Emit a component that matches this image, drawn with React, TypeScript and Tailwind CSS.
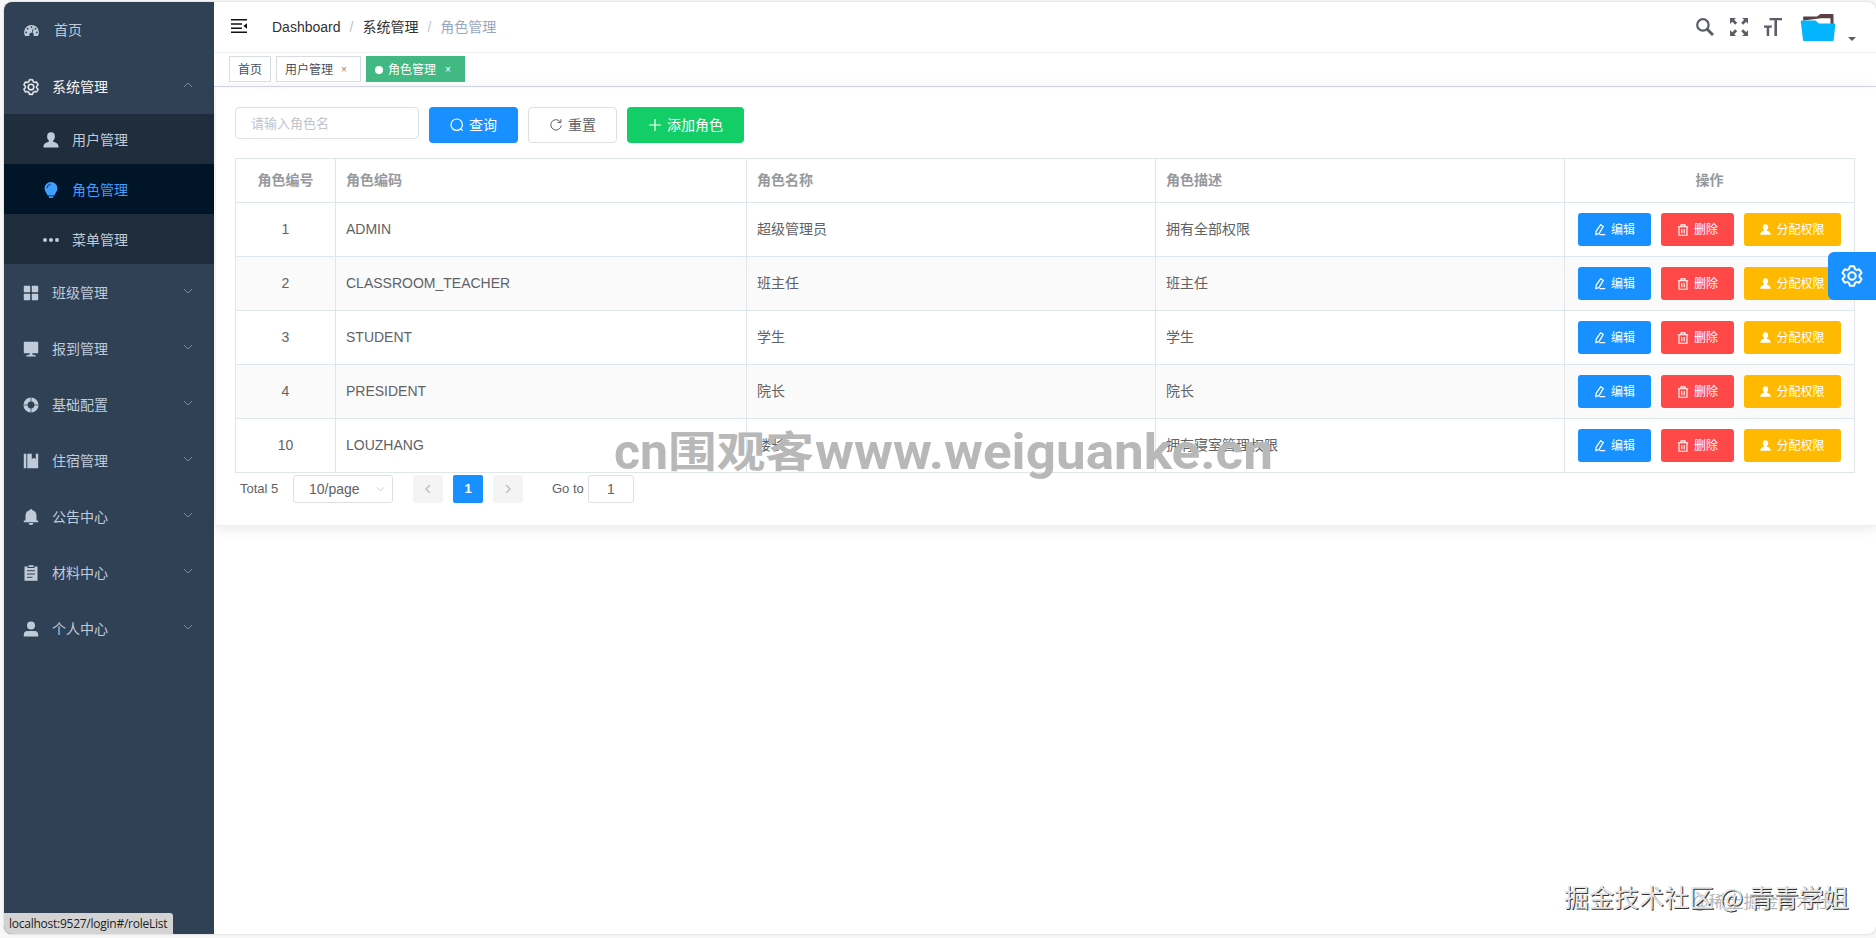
import React from 'react';

type IconProps = { className?: string };

const GearIcon: React.FC<IconProps> = ({ className }) => (
  <svg viewBox="0 0 1024 1024" fill="currentColor" stroke="currentColor" strokeWidth="22" className={className}>
    <path d="M600.7 64a32 32 0 0 1 30.500 22.200l35.200 109.400c14.700 7.200 28.700 15.400 42.400 24.400l112.400-24.200a32 32 0 0 1 34.400 15.300L944.300 364.800a32 32 0 0 1-4 37.500l-77.100 85.100a357.100 357.100 0 0 1 0 49l77.100 85.200a32 32 0 0 1 4 37.500l-88.700 153.600a32 32 0 0 1-34.400 15.300L708.800 803.900c-13.600 9.100-27.800 17.200-42.300 24.400l-35.300 109.400A32 32 0 0 1 600.700 960H423.300a32 32 0 0 1-30.500-22.200L357.700 828.500a351.600 351.600 0 0 1-42.600-24.600l-112.400 24.200a32 32 0 0 1-34.400-15.300L79.700 659.200a32 32 0 0 1 4-37.500l77.100-85.200a357.100 357.100 0 0 1 0-48.900l-77.100-85.300a32 32 0 0 1-4-37.500l88.700-153.600a32 32 0 0 1 34.400-15.300l112.400 24.300c13.700-9.100 27.900-17.300 42.600-24.600l35.100-109.400A32 32 0 0 1 423.300 64H600.700zM577.300 128H446.700l-36.400 113.100-24.500 12.300a294.100 294.100 0 0 0-34.800 20.100l-22.800 15.400-116.400-25.100-65.300 113.200 79.700 88.200-2 27.300a293.100 293.100 0 0 0 0 40.200l2 27.300-79.800 88.200 65.300 113.200 116.400-25 22.800 15.300c11.200 7.500 22.800 14.200 34.800 20.100l24.500 12.300 36.400 113.100h130.700l36.500-113.200 24.400-12.200a288.300 288.300 0 0 0 34.700-20.100l22.800-15.400 116.500 25.100 65.300-113.200-79.800-88.200 2-27.300a293.100 293.100 0 0 0 0-40.300l-2-27.300 79.800-88.100-65.300-113.200-116.500 24.900-22.800-15.200a288.300 288.300 0 0 0-34.700-20.100l-24.400-12.200L577.300 128zM512 320a192 192 0 1 1 0 384 192 192 0 0 1 0-384zm0 64a128 128 0 1 0 0 256 128 128 0 0 0 0-256z" />
  </svg>
);

const DashboardIcon: React.FC<IconProps> = ({ className }) => (
  <svg viewBox="0 0 16 14" className={className}>
    <path fill="currentColor" d="M8 1a8 8 0 0 1 8 8c0 1.600-.4 3-1.200 4H10a2.200 2.200 0 0 0-.8-3.200l1-4.300-.9-.2-1 4.200A2.200 2.200 0 0 0 6 13H1.200A8 8 0 0 1 0 9a8 8 0 0 1 8-8Z" />
    <g fill="#304156">
      <circle cx="8" cy="3.300" r="1" />
      <circle cx="3.800" cy="5" r="1" />
      <circle cx="12.300" cy="5" r="1" />
      <circle cx="2.300" cy="9" r="1" />
      <circle cx="13.700" cy="9" r="1" />
    </g>
  </svg>
);

const UserSolidIcon: React.FC<IconProps> = ({ className }) => (
  <svg viewBox="0 0 16 16" fill="currentColor" className={className}>
    <ellipse cx="8" cy="4.600" rx="3.900" ry="4.300" />
    <path d="M5.800 8h4.400v1.700c3.300.6 5.400 2.300 5.400 5.300v.6H.4V15c0-3 2.100-4.700 5.400-5.300z" />
  </svg>
);

const PersonIcon: React.FC<IconProps> = ({ className }) => (
  <svg viewBox="0 0 16 16" fill="currentColor" className={className}>
    <circle cx="8" cy="4.600" r="4" />
    <path d="M.8 15.500v-1.800c0-2.600 1.700-3.700 3.700-3.700h7c2 0 3.700 1.100 3.700 3.700v1.800z" />
  </svg>
);

const BulbIcon: React.FC<IconProps> = ({ className }) => (
  <svg viewBox="0 0 16 16" className={className}>
    <path fill="currentColor" d="M8 0a6.400 6.400 0 0 1 6.400 6.400c0 3-2.200 4.300-3 7H4.600c-.8-2.700-3-4-3-7A6.400 6.400 0 0 1 8 0ZM5.400 14.300h5.200L9.700 16H6.300z" />
    <path fill="none" stroke="#001528" strokeWidth=".8" d="M4 6.200A4 4 0 0 1 7.500 2.300" />
  </svg>
);

const MoreIcon: React.FC<IconProps> = ({ className }) => (
  <svg viewBox="0 0 16 16" fill="currentColor" className={className}>
    <circle cx="2" cy="8" r="2" />
    <circle cx="8" cy="8" r="2" />
    <circle cx="14" cy="8" r="2" />
  </svg>
);

const GridIcon: React.FC<IconProps> = ({ className }) => (
  <svg viewBox="0 0 16 16" fill="currentColor" className={className}>
    <rect x=".8" y=".8" width="6.400" height="6.400" rx=".6" />
    <rect x="8.800" y=".8" width="6.400" height="6.400" rx=".6" />
    <rect x=".8" y="8.800" width="6.400" height="6.400" rx=".6" />
    <rect x="8.800" y="8.800" width="6.400" height="6.400" rx=".6" />
  </svg>
);

const MonitorIcon: React.FC<IconProps> = ({ className }) => (
  <svg viewBox="0 0 16 16" fill="currentColor" className={className}>
    <rect x=".8" y=".8" width="14.400" height="11.400" rx=".6" />
    <path d="M6.800 12h2.400v1.600l3.600.9v.9H3.200v-.9l3.600-.9z" />
  </svg>
);

const HelpIcon: React.FC<IconProps> = ({ className }) => (
  <svg viewBox="0 0 16 16" className={className}>
    <circle cx="8" cy="8" r="5.500" fill="none" stroke="currentColor" strokeWidth="4.200" />
    <path d="M8 0v5M8 11v5M0 8h5M11 8h5" stroke="#304156" strokeWidth=".7" />
  </svg>
);

const NotebookIcon: React.FC<IconProps> = ({ className }) => (
  <svg viewBox="0 0 16 16" fill="currentColor" className={className}>
    <path d="M.8.8h2.500v14.400H.8zM4.300.8h4.500v5.400l2-1.500 2 1.500V.8h2.400v14.400H4.300z" />
  </svg>
);

const BellIcon: React.FC<IconProps> = ({ className }) => (
  <svg viewBox="0 0 16 16" fill="currentColor" className={className}>
    <path d="M7.200 0h1.600v1.100c2.800.4 4.700 2.700 4.700 5.500v5h1.700v1.600H.8v-1.600h1.700v-5c0-2.800 1.900-5.100 4.700-5.500zM5.500 14h5A2.500 2.500 0 0 1 8 16a2.500 2.500 0 0 1-2.500-2z" />
  </svg>
);

const ClipboardIcon: React.FC<IconProps> = ({ className }) => (
  <svg viewBox="0 0 16 16" className={className}>
    <path fill="currentColor" d="M1.500 1.500h3v1.500h7V1.500h3v14.200h-13zM5.500.3h5V2h-5z" />
    <path stroke="#304156" strokeWidth="1" d="M4 5.700h8M4 9h8M4 12.300h5.500" />
  </svg>
);

const Chevron: React.FC<{ up?: boolean }> = ({ up }) => (
  <svg viewBox="0 0 10 6" className="mb-1 h-[6px] w-[10px] text-[#8492a3]" fill="none" stroke="currentColor" strokeWidth=".9">
    <path d={up ? 'M1 5l4-4 4 4' : 'M1 1l4 4 4-4'} />
  </svg>
);

const EditIcon: React.FC<IconProps> = ({ className }) => (
  <svg viewBox="0 0 12 12" fill="none" stroke="currentColor" strokeWidth="1.200" className={className}>
    <path d="M6.600.8l2.700 1.600-4.200 7-3.200 1.300.2-3.400zM5.500 10.700h5.700" />
  </svg>
);

const TrashIcon: React.FC<IconProps> = ({ className }) => (
  <svg viewBox="0 0 12 12" fill="none" stroke="currentColor" strokeWidth="1.100" className={className}>
    <path d="M.8 2.800h10.400M4 2.500V.9h4v1.600M2 3v8.300h8V3M4.800 5v4.300M7.200 5v4.300" />
  </svg>
);

const menus = [
  { label: '班级管理', icon: GridIcon },
  { label: '报到管理', icon: MonitorIcon },
  { label: '基础配置', icon: HelpIcon },
  { label: '住宿管理', icon: NotebookIcon },
  { label: '公告中心', icon: BellIcon },
  { label: '材料中心', icon: ClipboardIcon },
  { label: '个人中心', icon: PersonIcon },
];

const subMenus = [
  { label: '用户管理', icon: UserSolidIcon, active: false },
  { label: '角色管理', icon: BulbIcon, active: true },
  { label: '菜单管理', icon: MoreIcon, active: false },
];

const roles = [
  { id: 1, code: 'ADMIN', name: '超级管理员', desc: '拥有全部权限' },
  { id: 2, code: 'CLASSROOM_TEACHER', name: '班主任', desc: '班主任' },
  { id: 3, code: 'STUDENT', name: '学生', desc: '学生' },
  { id: 4, code: 'PRESIDENT', name: '院长', desc: '院长' },
  { id: 10, code: 'LOUZHANG', name: '楼长', desc: '拥有寝室管理权限' },
];

const Sidebar = () => (
  <aside className="w-[210px] shrink-0 bg-[#304156] text-[14px] text-[#bfcbd9]">
    <div className="flex h-14 items-center pt-px pl-5">
      <DashboardIcon className="h-[13px] w-[15px]" />
      <span className="ml-[15px]">首页</span>
    </div>
    <div className="flex h-14 items-center pt-0.5 pr-[21px] pl-[18px] text-[#f4f4f5]">
      <GearIcon className="h-[18px] w-[18px]" />
      <span className="ml-3 flex-1">系统管理</span>
      <Chevron up />
    </div>
    {subMenus.map(({ label, icon: Icon, active }) => (
      <div
        key={label}
        className={`flex h-[50px] items-center pt-0.5 pl-[39px] ${active ? 'bg-[#001528] text-[#409eff]' : 'bg-[#1f2d3d]'}`}
      >
        <Icon className="h-4 w-4" />
        <span className="ml-[13px]">{label}</span>
      </div>
    ))}
    {menus.map(({ label, icon: Icon }) => (
      <div key={label} className="flex h-14 items-center pt-0.5 pr-[21px] pl-[19px]">
        <Icon className="h-4 w-4" />
        <span className="ml-[13px] flex-1">{label}</span>
        <Chevron />
      </div>
    ))}
  </aside>
);

const Navbar = () => (
  <header className="flex h-[51px] items-center border-b border-[#f0f1f2] pl-[17px] text-[14px]">
    <svg viewBox="0 0 16 14" className="mb-0.5 h-[14px] w-4" fill="#111">
      <path d="M0 0h16v1.500H0zM0 4.200h11v1.500H0zM0 8.400h11v1.500H0zM0 12.500h16V14H0zM16 4.300v5.400l-3.600-2.700z" />
    </svg>
    <div className="ml-[25px] flex-1 text-[#303133]">
      <span>Dashboard</span>
      <span className="mx-[9px] text-[#c0c4cc]">/</span>
      <span>系统管理</span>
      <span className="mx-[9px] text-[#c0c4cc]">/</span>
      <span className="text-[#97a8be]">角色管理</span>
    </div>
    <div className="flex items-center text-[#5a5e66]">
      <svg viewBox="0 0 18 18" className="h-[18px] w-[18px]" fill="none" stroke="currentColor">
        <circle cx="6.900" cy="6.900" r="5.700" strokeWidth="2.200" />
        <path d="M11 11l6 6" strokeWidth="3" />
      </svg>
      <svg viewBox="0 0 18 18" className="ml-4 h-[18px] w-[18px]" fill="currentColor">
        <path d="M0 0h6L4.200 1.800l3 3-2 2-3-3L0 6zM18 0v6l-1.800-2.200-3 3-2-2 3-3L12 0zM0 18v-6l2.200 2.200 3-3 2 2-3 3L6 18zM18 18h-6l2.200-1.800-3-3 2-2 3 3L18 12z" />
      </svg>
      <svg viewBox="0 0 18 18" className="ml-4 h-[18px] w-[18px]" fill="currentColor">
        <path d="M5.500 0H18v2.300h-5v15.700h-2.600V2.300H5.500zM0 7.600h7.800v2.200H5.200V18H2.700V9.800H0z" />
      </svg>
      <svg viewBox="0 0 36 30" className="mt-px ml-[18px] h-[30px] w-9">
        <path d="M3 4.500a1 1 0 0 1 1-1h13l3.500-2.500h12a1 1 0 0 1 1 1v20H5z" fill="#5d4045" />
        <path d="M4 7.500l17-2.300h9.500V20H4z" fill="#fff" />
        <path d="M1.500 7.500h14l3.500 3h15.500a.8.8 0 0 1 .8.900l-1.600 15.600a1 1 0 0 1-1 1H4a1 1 0 0 1-1-.9L.8 8.500a.9.900 0 0 1 .7-1z" fill="#03b5fc" />
      </svg>
      <svg viewBox="0 0 8 4" className="mt-6 mr-5 ml-3 h-1 w-2" fill="#5a5e66">
        <path d="M0 0h8L4 4z" />
      </svg>
    </div>
  </header>
);

const TagsView = () => (
  <div className="flex h-[34px] items-start gap-[5px] border-b border-[#d8dce5] pt-[3px] pl-[15px] text-[12px] text-[#495060] shadow-[0_1px_2px_0_rgba(0,0,0,0.04)]">
    <span className="flex h-[26px] w-[42px] items-center justify-center border border-[#d8dce5] pt-px">首页</span>
    <span className="flex h-[26px] w-[85px] items-center border border-[#d8dce5] pt-px pl-2">
      用户管理<span className="ml-2 text-[10px] text-[#888]">×</span>
    </span>
    <span className="flex h-[26px] w-[99px] items-center bg-[#42b983] pt-px pl-[9px] text-white">
      <span className="mr-[5px] h-2 w-2 rounded-full bg-white"></span>
      角色管理<span className="ml-[9px] text-[10px]">×</span>
    </span>
  </div>
);

const RoleTable = () => (
  <table className="mt-[15px] w-[1620px] table-fixed border-separate border-spacing-0 border-t border-l border-[#dfe6ec] text-left text-[14px] text-[#606266] [&_td]:border-r [&_td]:border-b [&_td]:border-[#dfe6ec] [&_td]:px-2.5 [&_th]:border-r [&_th]:border-b [&_th]:border-[#dfe6ec] [&_th]:px-2.5">
    <colgroup>
      <col className="w-[100px]" />
      <col className="w-[411px]" />
      <col className="w-[409px]" />
      <col className="w-[409px]" />
      <col className="w-[290px]" />
    </colgroup>
    <thead>
      <tr className="h-11 text-[#96999e]">
        <th className="text-center">角色编号</th>
        <th>角色编码</th>
        <th>角色名称</th>
        <th>角色描述</th>
        <th className="text-center">操作</th>
      </tr>
    </thead>
    <tbody>
      {roles.map((role, idx) => (
        <tr key={role.id} className={`h-[54px] ${idx % 2 ? 'bg-[#fafafa]' : ''}`}>
          <td className="text-center">{role.id}</td>
          <td>{role.code}</td>
          <td>{role.name}</td>
          <td>{role.desc}</td>
          <td>
            <div className="flex justify-center gap-2.5 text-[12px] text-white">
              <button className="flex h-[33px] w-[73px] items-center justify-center gap-[5px] rounded-[3px] bg-[#1890ff]">
                <EditIcon className="h-3 w-3" />编辑
              </button>
              <button className="flex h-[33px] w-[73px] items-center justify-center gap-[5px] rounded-[3px] bg-[#ff4949]">
                <TrashIcon className="h-3 w-3" />删除
              </button>
              <button className="flex h-[33px] w-[97px] items-center justify-center gap-[5px] rounded-[3px] bg-[#ffba00]">
                <UserSolidIcon className="h-[11px] w-[11px]" />分配权限
              </button>
            </div>
          </td>
        </tr>
      ))}
    </tbody>
  </table>
);

const Pagination = () => (
  <div className="mt-0.5 flex h-7 items-center pl-[5px] text-[13px] text-[#606266]">
    <span className="w-[53px]">Total 5</span>
    <div className="flex h-7 w-[100px] items-center justify-between rounded-[3px] border border-[#dcdfe6] pr-[7px] pl-[15px] text-[14px]">
      10/page
      <svg viewBox="0 0 10 6" className="h-[6px] w-[9px]" fill="none" stroke="#c0c4cc">
        <path d="M1 1l4 4 4-4" />
      </svg>
    </div>
    <div className="ml-5 flex gap-2.5">
      <button className="flex h-7 w-[30px] items-center justify-center rounded-[2px] bg-[#f4f4f5]">
        <svg viewBox="0 0 6 10" className="h-[10px] w-[6px]" fill="none" stroke="#c0c4cc" strokeWidth="1.700">
          <path d="M5 1L1 5l4 4" />
        </svg>
      </button>
      <button className="h-7 w-[30px] rounded-[2px] bg-[#1890ff] font-bold text-white">1</button>
      <button className="flex h-7 w-[30px] items-center justify-center rounded-[2px] bg-[#f4f4f5]">
        <svg viewBox="0 0 6 10" className="h-[10px] w-[6px]" fill="none" stroke="#c0c4cc" strokeWidth="1.700">
          <path d="M1 1l4 4-4 4" />
        </svg>
      </button>
    </div>
    <span className="ml-[29px] w-9 whitespace-nowrap">Go to</span>
    <div className="flex h-7 w-[46px] items-center justify-center rounded-[3px] border border-[#dcdfe6] text-[14px]">1</div>
  </div>
);

const App: React.FC = () => {
  return (
    <div className="relative h-[938px] w-[1876px] overflow-hidden bg-[#f7f7f7] pt-0.5 pl-1 font-['Liberation_Sans','Noto_Sans_CJK_SC',sans-serif]">
      <div className="flex h-[932px] overflow-hidden rounded-[8px] bg-white shadow-[0_0_2px_rgba(0,0,0,0.25)]">
        <Sidebar />
        <main className="min-w-0 flex-1">
          <Navbar />
          <TagsView />
          <section className="ml-0.5 h-[439px] border-b border-[#ebeef5] px-[19px] pt-5 shadow-[0_2px_12px_0_rgba(0,0,0,0.1)]">
            {/* Search bar */}
            <div className="flex items-start text-[14px]">
              <input
                placeholder="请输入角色名"
                className="h-8 w-[184px] rounded-[4px] border border-[#dcdfe6] px-[15px] text-[13px] placeholder:text-[#c0c4cc]"
              />
              <button className="ml-2.5 flex h-9 w-[89px] items-center justify-center gap-[5px] rounded-[4px] bg-[#1890ff] text-white">
                <svg viewBox="0 0 14 14" className="h-[14px] w-[14px]" fill="none" stroke="currentColor" strokeWidth="1.200">
                  <circle cx="6.700" cy="6.700" r="5.700" />
                  <path d="M10.700 10.700l2 2" />
                </svg>
                查询
              </button>
              <button className="ml-2.5 flex h-9 w-[89px] items-center justify-center gap-[5px] rounded-[4px] border border-[#dcdfe6] text-[#606266]">
                <svg viewBox="0 0 14 14" className="h-[14px] w-[14px]" fill="none" stroke="currentColor" strokeWidth="1">
                  <path d="M11.500 4.200A5.200 5.200 0 1 0 12.200 7.500M11.900 1.200v3.300H8.600" />
                </svg>
                重置
              </button>
              <button className="ml-2.5 flex h-9 w-[117px] items-center justify-center gap-[5px] rounded-[4px] bg-[#13ce66] text-white">
                <svg viewBox="0 0 14 14" className="h-[14px] w-[14px]" fill="none" stroke="currentColor" strokeWidth="1.200">
                  <path d="M7 1v12M1 7h12" />
                </svg>
                添加角色
              </button>
            </div>
            <RoleTable />
            <Pagination />
          </section>
        </main>
      </div>

      {/* Settings handle */}
      <button className="absolute top-[252px] right-0 flex h-12 w-12 items-center justify-center rounded-l-[6px] bg-[#1890ff] text-white">
        <GearIcon className="h-6 w-6" />
      </button>

      {/* Link status */}
      <div className="absolute top-[913px] left-1 flex h-[21px] w-[169px] items-center rounded-tr-[3px] rounded-bl-[8px] bg-[#d3d3d3] pl-[5px] font-['Open_Sans',sans-serif] text-[12px] tracking-[-0.25px] text-[#222]">
        localhost:9527/login#/roleList
      </div>

      {/* Watermarks */}
      <svg className="pointer-events-none absolute top-[400px] left-[610px] h-[110px] w-[670px] overflow-visible font-['Roboto','Noto_Sans_CJK_SC',sans-serif]" fill="#b8b8b8" fontWeight="700">
        <text x="4" y="69" fontSize="50" textLength="54" lengthAdjust="spacingAndGlyphs">cn</text>
        <text x="58" y="67" fontSize="42" textLength="146" lengthAdjust="spacingAndGlyphs">围观客</text>
        <text x="205" y="69" fontSize="50" textLength="458" lengthAdjust="spacingAndGlyphs">www.weiguanke.cn</text>
      </svg>
      <div className="pointer-events-none absolute top-[888px] left-[1692px] font-['Noto_Sans_CJK_SC',sans-serif] text-[17.5px] whitespace-nowrap text-[#b5b5b5]">@稀土掘金技术社区</div>
      <div className="pointer-events-none absolute top-[878px] left-[1564px] font-['Noto_Sans_CJK_SC',sans-serif] text-[25px] leading-9 whitespace-nowrap text-[#e4e4e4] [text-shadow:1px_1px_0_#333]">掘金技术社区 @ 青青学姐</div>
    </div>
  );
};

export default App;
